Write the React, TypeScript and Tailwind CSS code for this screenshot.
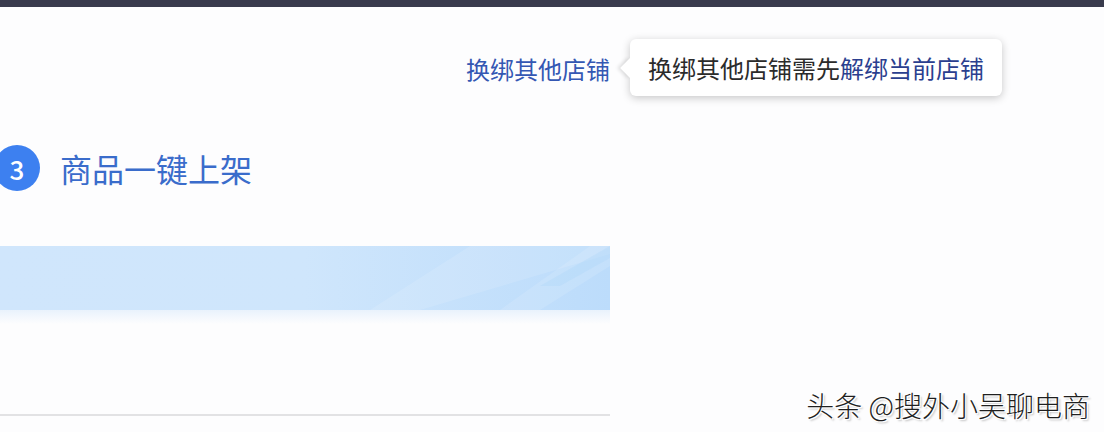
import React from 'react';

const font = { fontFamily: '"Noto Sans CJK SC", "Noto Sans", sans-serif' };

export default function App() {
  return (
    <div className="relative w-[1104px] h-[432px] overflow-hidden bg-[#fdfdfe]" style={font}>
      {/* top bar */}
      <div className="h-[7px] bg-[#393b4d]" />

      <div className="w-[610px]">
        {/* switch link */}
        <div className="mt-[46px] flex justify-end h-[32px] items-center">
          <span className="text-[24px] leading-[32px] text-[#3457b3]">换绑其他店铺</span>
        </div>

        {/* step title */}
        <div className="mt-[60px] flex items-center gap-[20px] -ml-[6px] h-[46px]">
          <div className="w-[46px] h-[46px] rounded-full bg-[#3d80f0] flex items-center justify-center text-white text-[26px] font-medium">
            3
          </div>
          <span className="text-[32px] leading-[40px] text-[#3a6ccb]">商品一键上架</span>
        </div>

        {/* banner */}
        <div className="mt-[55px] relative h-[64px] overflow-hidden bg-gradient-to-r from-[#d0e6fc] via-[#cfe6fc] to-[#bcdcfb]">
          <svg className="absolute inset-0" width="610" height="64" viewBox="0 0 610 64">
            <polygon points="370,64 470,0 610,0 610,8 420,64" fill="#ffffff" opacity="0.12" />
            <polygon points="500,64 590,0 610,0 610,20 540,64" fill="#ffffff" opacity="0.12" />
            <polygon points="540,40 610,0 610,12 560,40" fill="#a9d3fa" opacity="0.3" />
          </svg>
        </div>
        <div className="h-[14px] bg-gradient-to-b from-[#e9f2fc] to-[#fdfdfe]" />

        {/* divider */}
        <div className="mt-[90px] h-[2px] bg-[#e2e2e4]" />
      </div>

      {/* tooltip */}
      <div className="absolute left-[630px] top-[39px] w-[372px] h-[57px] rounded-[6px] bg-white shadow-[0_2px_8px_rgba(0,0,0,0.22)] flex items-center pl-[18px]">
        <div className="absolute -left-[7px] top-[22px] w-[14px] h-[14px] bg-white rotate-45 shadow-[-2px_2px_4px_rgba(0,0,0,0.12)]" />
        <div className="absolute left-0 top-[18px] w-[10px] h-[22px] bg-white" />
        <span className="relative text-[24px] leading-[32px] text-[#2b2b2b]">
          换绑其他店铺需先<span className="text-[#2b3f8f]">解绑当前店铺</span>
        </span>
      </div>

      {/* watermark */}
      <div
        className="absolute right-[14px] bottom-[10px] text-[28px] leading-[34px] font-light text-[#1f1f1f]"
        style={{ textShadow: '1px 1px 0 #fff, -1px -1px 0 #fff, 1px -1px 0 #fff, -1px 1px 0 #fff, 2px 2px 2px rgba(0,0,0,0.25)' }}
      >
        头条 @搜外小吴聊电商
      </div>
    </div>
  );
}
